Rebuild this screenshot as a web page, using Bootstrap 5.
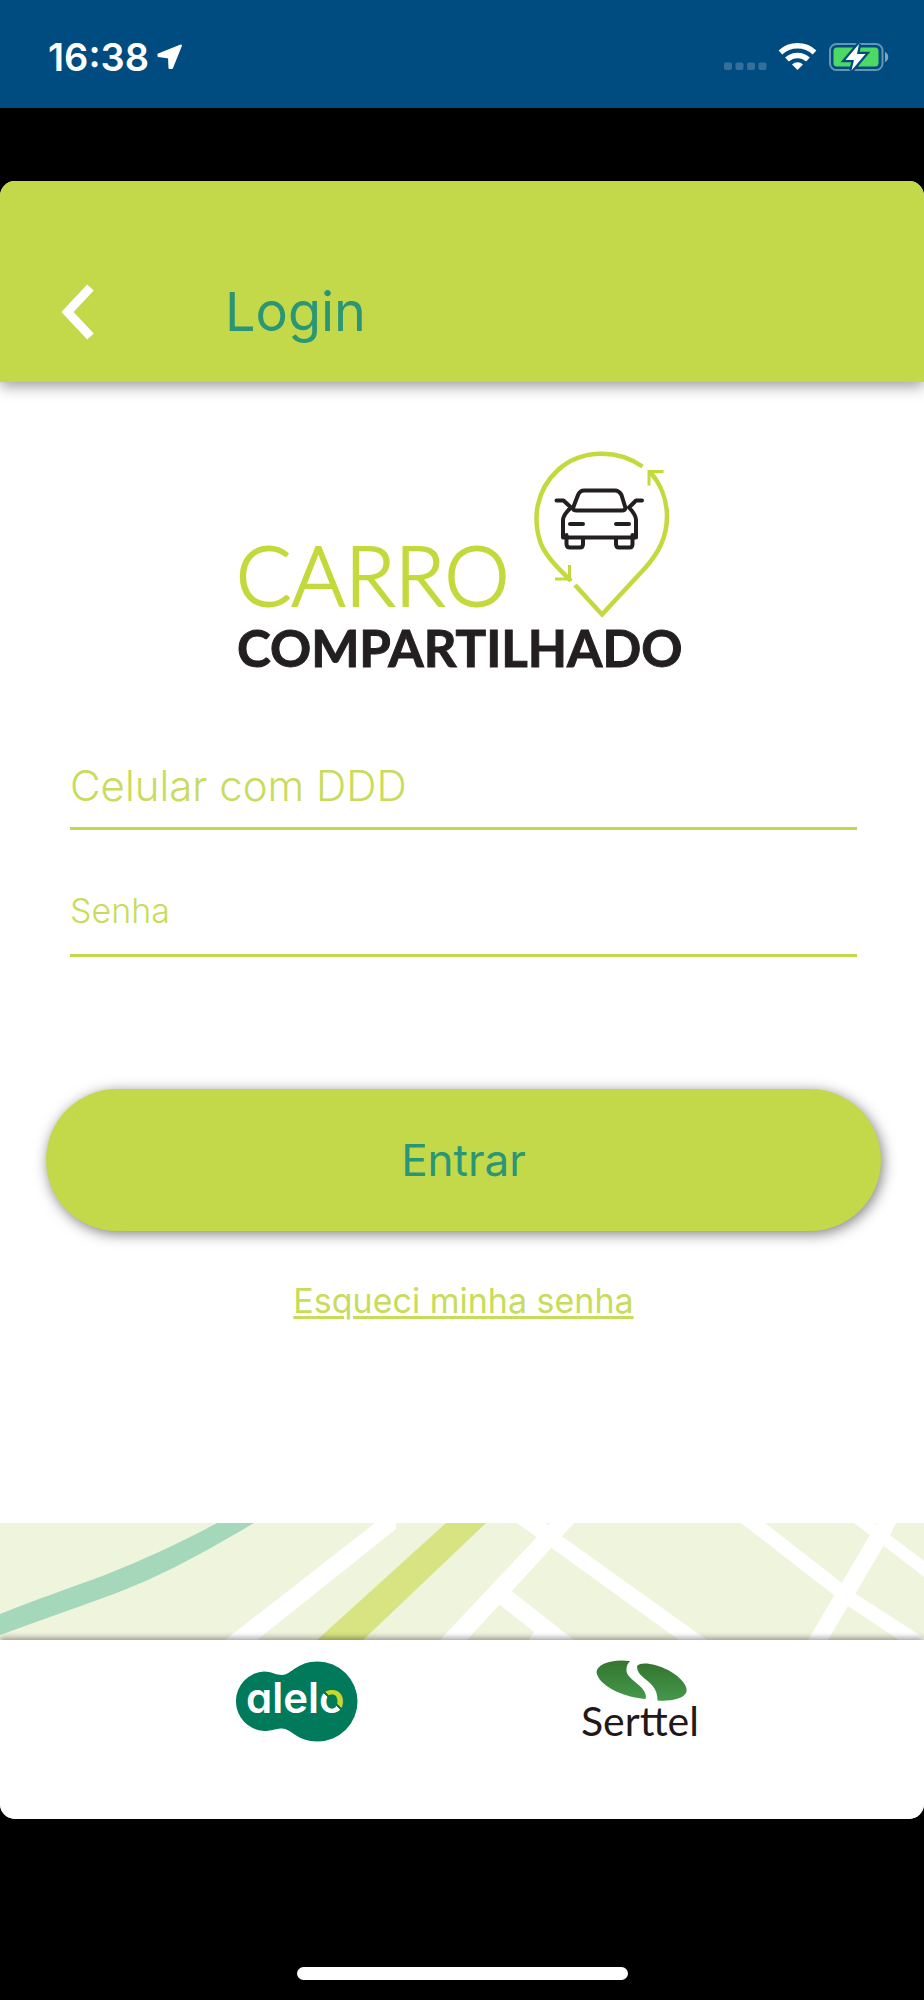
<!DOCTYPE html>
<html lang="pt-BR">
<head>
<meta charset="utf-8">
<meta name="viewport" content="width=device-width, initial-scale=1">
<title>Login - Carro Compartilhado</title>
<link href="https://cdn.jsdelivr.net/npm/bootstrap@5.3.0/dist/css/bootstrap.min.css" rel="stylesheet">
<style>
  :root { --lime: #c3d94a; --teal: #2a9676; }
  body { font-family: Inter, "Liberation Sans", sans-serif; }
  .status-bar { background: #004c80; height: 108px; padding: 6px 35px 0 48px; }
  .clock { font-size: 38px; line-height: 40px; font-weight: 600; }
  .app { margin-top: 73px; border-radius: 15px; }
  .app-header { background: var(--lime); padding: 99px 60px 38px; box-shadow: 0 4px 14px rgba(0,0,0,.4); }
  .app-title { color: var(--teal); font-size: 54px; line-height: 64px; font-weight: 400; margin-left: 131px; }
  .brand { width: 476px; margin-top: 58px; }
  .login-form { padding: 65px 43px 0 46px; }
  .fields { gap: 42px; padding: 0 24px; }
  .line-field > .line-input { height: 85px; border: 0; border-bottom: 3px solid var(--lime); border-radius: 0; padding: 0; background: none; color: #5f7016; font-size: 34px; font-weight: 300; }
  .line-field > .line-input:focus { box-shadow: none; border-color: var(--teal); background: none; }
  .line-field > label { padding: 0 0 3px; border: 0; color: #c8dc5c; font-weight: 300; line-height: 48px; display: flex; align-items: center; }
  .line-field > .text-large { font-size: 42px; }
  .line-field > .text-medium { font-size: 34px; padding-bottom: 7px; }
  .btn-enter { --bs-btn-color: var(--teal); --bs-btn-bg: var(--lime); --bs-btn-hover-bg: #b5cb3d; --bs-btn-hover-color: var(--teal); height: 142px; margin-top: 132px; border: 0; font-size: 44px; box-shadow: 2px 3px 14px rgba(0,0,0,.5); }
  .forgot { color: #c8dc5c; font-size: 34px; line-height: 48px; margin-top: 46px; font-weight: 400; text-underline-offset: 3px; text-decoration-thickness: 3px; }
  .map { margin-top: 198px; }
  .partners { padding: 20px 222px 76px 233px; box-shadow: 0 -2px 6px rgba(0,0,0,.4); }
  .home-area { min-height: 181px; padding-bottom: 20px; }
  .home-bar { width: 331px; height: 13px; }
</style>
</head>
<body class="bg-black min-vh-100 d-flex flex-column">

<div class="status-bar d-flex align-items-center justify-content-between text-white">
  <div class="d-flex align-items-center gap-2">
    <span class="clock">16:38</span>
    <svg width="26" height="26" viewBox="0 0 26 26" aria-hidden="true"><path d="M24 1.500 15 24 12.500 24 12 13.500 1.500 12 1.500 10.500Z" fill="#fff" stroke="#fff" stroke-width="2" stroke-linejoin="round"/></svg>
  </div>
  <svg width="166" height="30" viewBox="723 42 166 30" aria-hidden="true">
    <g fill="#33709a"><rect x="724" y="62.500" width="8" height="7.500" rx="2"/><rect x="735.500" y="62.500" width="8" height="7.500" rx="2"/><rect x="747" y="62.500" width="8" height="7.500" rx="2"/><rect x="758.500" y="62.500" width="8" height="7.500" rx="2"/></g>
    <g fill="none" stroke="#fff" stroke-width="5.500"><path d="M780.500 52.500A25 25 0 0 1 814.500 52.500"/><path d="M787 59.500A15.500 15.500 0 0 1 808 59.500"/></g>
    <path d="M792 64.500A8 8 0 0 1 803 64.500L797.500 70Z" fill="#fff"/>
    <rect x="830" y="44" width="52.500" height="26" rx="6.500" fill="none" stroke="#6694b3" stroke-width="2"/>
    <path d="M885 52a5.500 5.500 0 0 1 0 10Z" fill="#80a6bf"/>
    <rect x="833.500" y="47.500" width="45" height="19" rx="3.500" fill="#4cd964"/>
    <path d="M859 44 845.500 60H854L851.500 70.500 865.500 54H857Z" fill="#fff" stroke="#004c80" stroke-width="4.500" stroke-linejoin="miter" paint-order="stroke"/>
  </svg>
</div>

<div class="app bg-white overflow-hidden">
  <header class="app-header d-flex align-items-center position-relative">
    <button type="button" class="btn p-0 border-0 lh-1" aria-label="Voltar">
      <svg width="34" height="56" viewBox="0 0 34 56"><path d="M30.500 3.500 7.500 28 30.500 52.500" fill="none" stroke="#fff" stroke-width="9"/></svg>
    </button>
    <h1 class="app-title mb-0">Login</h1>
  </header>

  <main>
    <svg class="brand d-block mx-auto mw-100" viewBox="224 440 476 240" role="img" aria-label="Carro Compartilhado">
      <g fill="none" stroke="#c3d93c" stroke-width="4.500">
        <path d="M642.500 466.500C616 448 580 450 558 470C536 490 532 519 541 544C547 558 560 570 571 581"/>
        <path d="M575 585 602 614.500 646 567C658 553 667 538 667 516C667 499 660 483 650 472"/>
        <path d="M649 485.500V471.500H663.500M569.500 565V579H555" stroke-width="3"/>
      </g>
      <g fill="none" stroke="#231f20" stroke-width="4" stroke-linejoin="round" stroke-linecap="round">
        <path d="M573 508 578 495Q580 490.500 584 490.500H615Q619 490.500 621.500 495L625.500 508Q625 510.500 622 510.500H577Q573 510.500 573 508Z"/>
        <path d="M556.500 500.500H563.500L571 507.500Q563 515 563 520V537.500H636V520Q636 515 629 507.500L636 500.500H642"/>
        <path d="M570 524H583M616 524H629"/>
        <path d="M566.500 535V544Q566.500 547.500 570 547.500H580Q583 547.500 583 544V538M616 538V544Q616 547.500 619 547.500H629.500Q632.500 547.500 632.500 544V535"/>
      </g>
      <text x="236" y="606" font-family="Lato, sans-serif" font-weight="300" font-size="82" fill="#c3d93c" stroke="#c3d93c" stroke-width="2">CARRO</text>
      <text x="237" y="667" font-family="Lato, sans-serif" font-weight="700" font-size="51" fill="#231f20" stroke="#231f20" stroke-width="1">COMPARTILHADO</text>
    </svg>

    <form class="login-form d-flex flex-column">
      <div class="fields d-flex flex-column">
        <div class="form-floating line-field">
          <input id="phone" type="tel" class="form-control line-input" placeholder=" ">
          <label for="phone" class="text-large">Celular com DDD</label>
        </div>
        <div class="form-floating line-field">
          <input id="password" type="password" class="form-control line-input" placeholder=" ">
          <label for="password" class="text-medium">Senha</label>
        </div>
      </div>
      <button type="submit" class="btn btn-enter rounded-pill w-100">Entrar</button>
      <a href="#" class="forgot align-self-center">Esqueci minha senha</a>
    </form>

    <svg class="map d-block w-100" viewBox="0 1523 924 117" aria-hidden="true">
      <path d="M0 1523H924V1640H0Z" fill="#eff4dd"/>
      <g fill="#fff">
        <path d="M375 1523H396V1529L257 1640H225Z"/>
        <path d="M550 1523H574L467 1640H440Z"/>
        <path d="M517 1523H545L563 1537 707 1640H679Z"/>
        <path d="M495 1601 504 1585 574 1640H529L534 1632Z"/>
        <path d="M741 1523H765L856 1594 924 1638V1640H899L848 1606Z"/>
        <path d="M877 1523H896L890 1535 828 1640H808Z"/>
        <path d="M854 1523H874L924 1561V1577Z"/>
      </g>
      <path d="M0 1614C40 1598 70 1588 105 1575C145 1559 180 1543 217 1523H254C215 1546 185 1563 150 1579C115 1595 60 1613 0 1635Z" fill="#a5d8bb"/>
      <path d="M446 1523H486L363 1640H317Z" fill="#d8e481"/>
    </svg>
  </main>

  <footer class="partners bg-white position-relative d-flex justify-content-between align-items-start">
    <svg width="126" height="83" viewBox="234 1660 126 83" role="img" aria-label="alelo">
      <defs>
        <linearGradient id="ring" gradientUnits="userSpaceOnUse" x1="322" y1="1711" x2="342" y2="1691">
          <stop offset=".5" stop-color="#fff"/><stop offset=".5" stop-color="#007a5a"/>
          <stop offset=".58" stop-color="#007a5a"/><stop offset=".58" stop-color="#c3d92e"/>
        </linearGradient>
      </defs>
      <path d="M265 1671.500C272 1671.500 277 1675 283 1675C292 1675 298 1661.500 318.500 1661.500A40 40 0 0 1 318.500 1741.500C298 1741.500 292 1728.500 283 1728.500C277 1728.500 273 1731 265 1731A29.800 29.800 0 0 1 265 1671.500Z" fill="#007a5a"/>
      <text x="247" y="1713" font-size="42" font-weight="600" fill="#fff" style="font-feature-settings:'cv11'">alel<tspan fill="url(#ring)">o</tspan></text>
    </svg>
    <svg width="122" height="83" viewBox="580 1660 122 83" role="img" aria-label="Serttel">
      <defs><linearGradient id="leaf" x2="0" y2="1"><stop stop-color="#34752f"/><stop offset="1" stop-color="#44984b"/></linearGradient></defs>
      <g fill="url(#leaf)">
        <path d="M630 1661C612 1658.500 597 1664 596.500 1672C598 1685 622 1697 645.500 1699C649 1687 627 1680 626.500 1671Q626 1665 630 1661Z"/>
        <path d="M637 1666C641 1661 656 1664 668 1670C681 1677 688 1686 686.500 1692C684 1699 670 1701.500 657.500 1700.500C658 1680 637 1680 637 1666Z"/>
      </g>
      <text x="581" y="1736" font-family="Lato, sans-serif" font-size="41" fill="#231815">Serttel</text>
    </svg>
  </footer>
</div>

<div class="home-area flex-grow-1 d-flex align-items-end justify-content-center">
  <div class="home-bar bg-white rounded-pill"></div>
</div>

<script src="https://cdn.jsdelivr.net/npm/bootstrap@5.3.0/dist/js/bootstrap.bundle.min.js"></script>
</body>
</html>
